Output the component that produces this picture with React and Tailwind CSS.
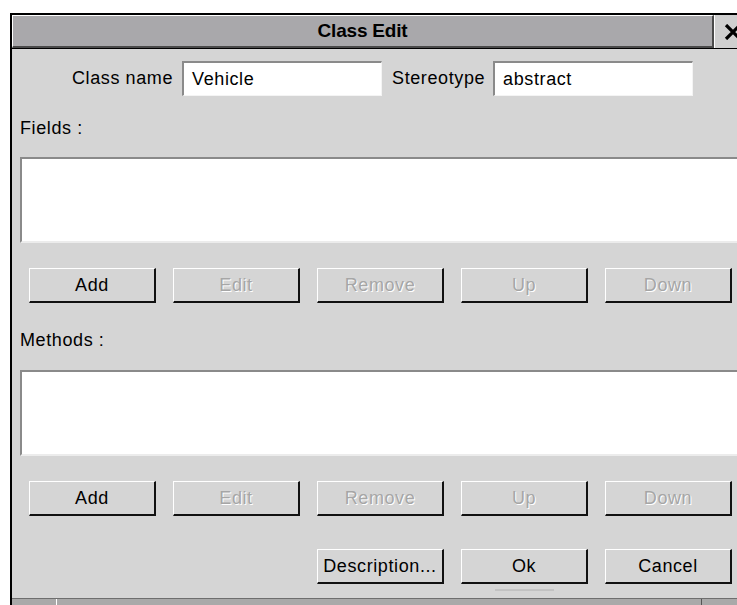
import React from "react";

const FONT = { fontFamily: '"Liberation Sans", Arial, sans-serif' };

function Button({ label, disabled }) {
  return (
    <div
      className={
        "flex h-[35px] w-[127px] items-center justify-center border-t border-l border-t-white border-l-white border-r-2 border-b-2 border-r-[#111] border-b-[#111] bg-[#d5d5d5] text-[18px] tracking-[0.6px] " +
        (disabled
          ? "text-[#a6a6a6] [text-shadow:1px_1px_0_#ffffff]"
          : "text-black")
      }
    >
      {label}
    </div>
  );
}

function ButtonRow() {
  return (
    <div className="ml-[17px] grid grid-cols-[repeat(5,127px)] gap-x-[17px]">
      <Button label="Add" />
      <Button label="Edit" disabled />
      <Button label="Remove" disabled />
      <Button label="Up" disabled />
      <Button label="Down" disabled />
    </div>
  );
}

function TextField({ value }) {
  return (
    <div className="flex h-[35px] w-[200px] items-center border-t-2 border-l-2 border-t-[#8a8a8a] border-l-[#8a8a8a] border-b border-r border-b-[#f4f4f4] border-r-[#f4f4f4] bg-white pl-[8px] text-[18px] tracking-[0.6px] text-black">
      {value}
    </div>
  );
}

function ListBox() {
  return (
    <div className="ml-[8px] h-[86px] w-[740px] border-t-2 border-l-2 border-t-[#8a8a8a] border-l-[#8a8a8a] border-b-2 border-b-[#ececec] bg-white" />
  );
}

export default function App() {
  return (
    <div className="h-[605px] w-[737px] overflow-hidden bg-white pl-[10px] pt-[13px]" style={FONT}>
      <div className="flex h-[592px] w-[760px] flex-col border-t-2 border-l-2 border-black bg-[#d5d5d5]">
        {/* title bar */}
        <div className="flex h-[34px] border-b border-b-black">
          <div className="flex w-[702px] items-center justify-center border-t border-l border-t-white border-l-white border-b-2 border-r-2 border-b-[#4a4a4a] border-r-[#4a4a4a] bg-[#a9a8ab] text-[19px] font-bold tracking-[-0.2px] text-black">
            Class Edit
          </div>
          <div className="flex flex-1 items-center border-l border-l-white bg-[#cfcfcf] pl-[9px]">
            <svg width="18" height="16" viewBox="0 0 18 16">
              <path d="M2 1 L16 15 M16 1 L2 15" stroke="#000" strokeWidth="3.2" />
            </svg>
          </div>
        </div>

        {/* name / stereotype */}
        <div className="mt-[12px] flex items-center pl-[60px] text-[18px] tracking-[0.6px] text-black">
          <span className="mr-[9px]">Class name</span>
          <TextField value="Vehicle" />
          <span className="ml-[10px] mr-[8px]">Stereotype</span>
          <TextField value="abstract" />
        </div>

        {/* fields */}
        <div className="mt-[21px] mb-[18px] pl-[8px] text-[18px] leading-[22px] tracking-[0.6px] text-black">
          Fields :
        </div>
        <ListBox />
        <div className="mt-[25px]">
          <ButtonRow />
        </div>

        {/* methods */}
        <div className="mt-[26px] mb-[19px] pl-[8px] text-[18px] leading-[22px] tracking-[0.6px] text-black">
          Methods :
        </div>
        <ListBox />
        <div className="mt-[25px]">
          <ButtonRow />
        </div>

        {/* dialog actions */}
        <div className="mt-[33px] ml-[17px] grid grid-cols-[repeat(5,127px)] gap-x-[17px]">
          <div className="col-start-3">
            <Button label="Description..." />
          </div>
          <div className="flex flex-col items-center">
            <Button label="Ok" />
            <div className="mt-[5px] h-[2px] w-[59px] bg-[#c2c2c2]" />
          </div>
          <Button label="Cancel" />
        </div>

        {/* status strip along the bottom edge */}
        <div className="mt-auto flex h-[7px] border-t border-t-[#6e6e6e] bg-[#a9a9a9]">
          <div className="w-[45px] border-r border-r-white" />
          <div className="w-[645px] border-r border-r-[#555]" />
        </div>
      </div>
    </div>
  );
}
